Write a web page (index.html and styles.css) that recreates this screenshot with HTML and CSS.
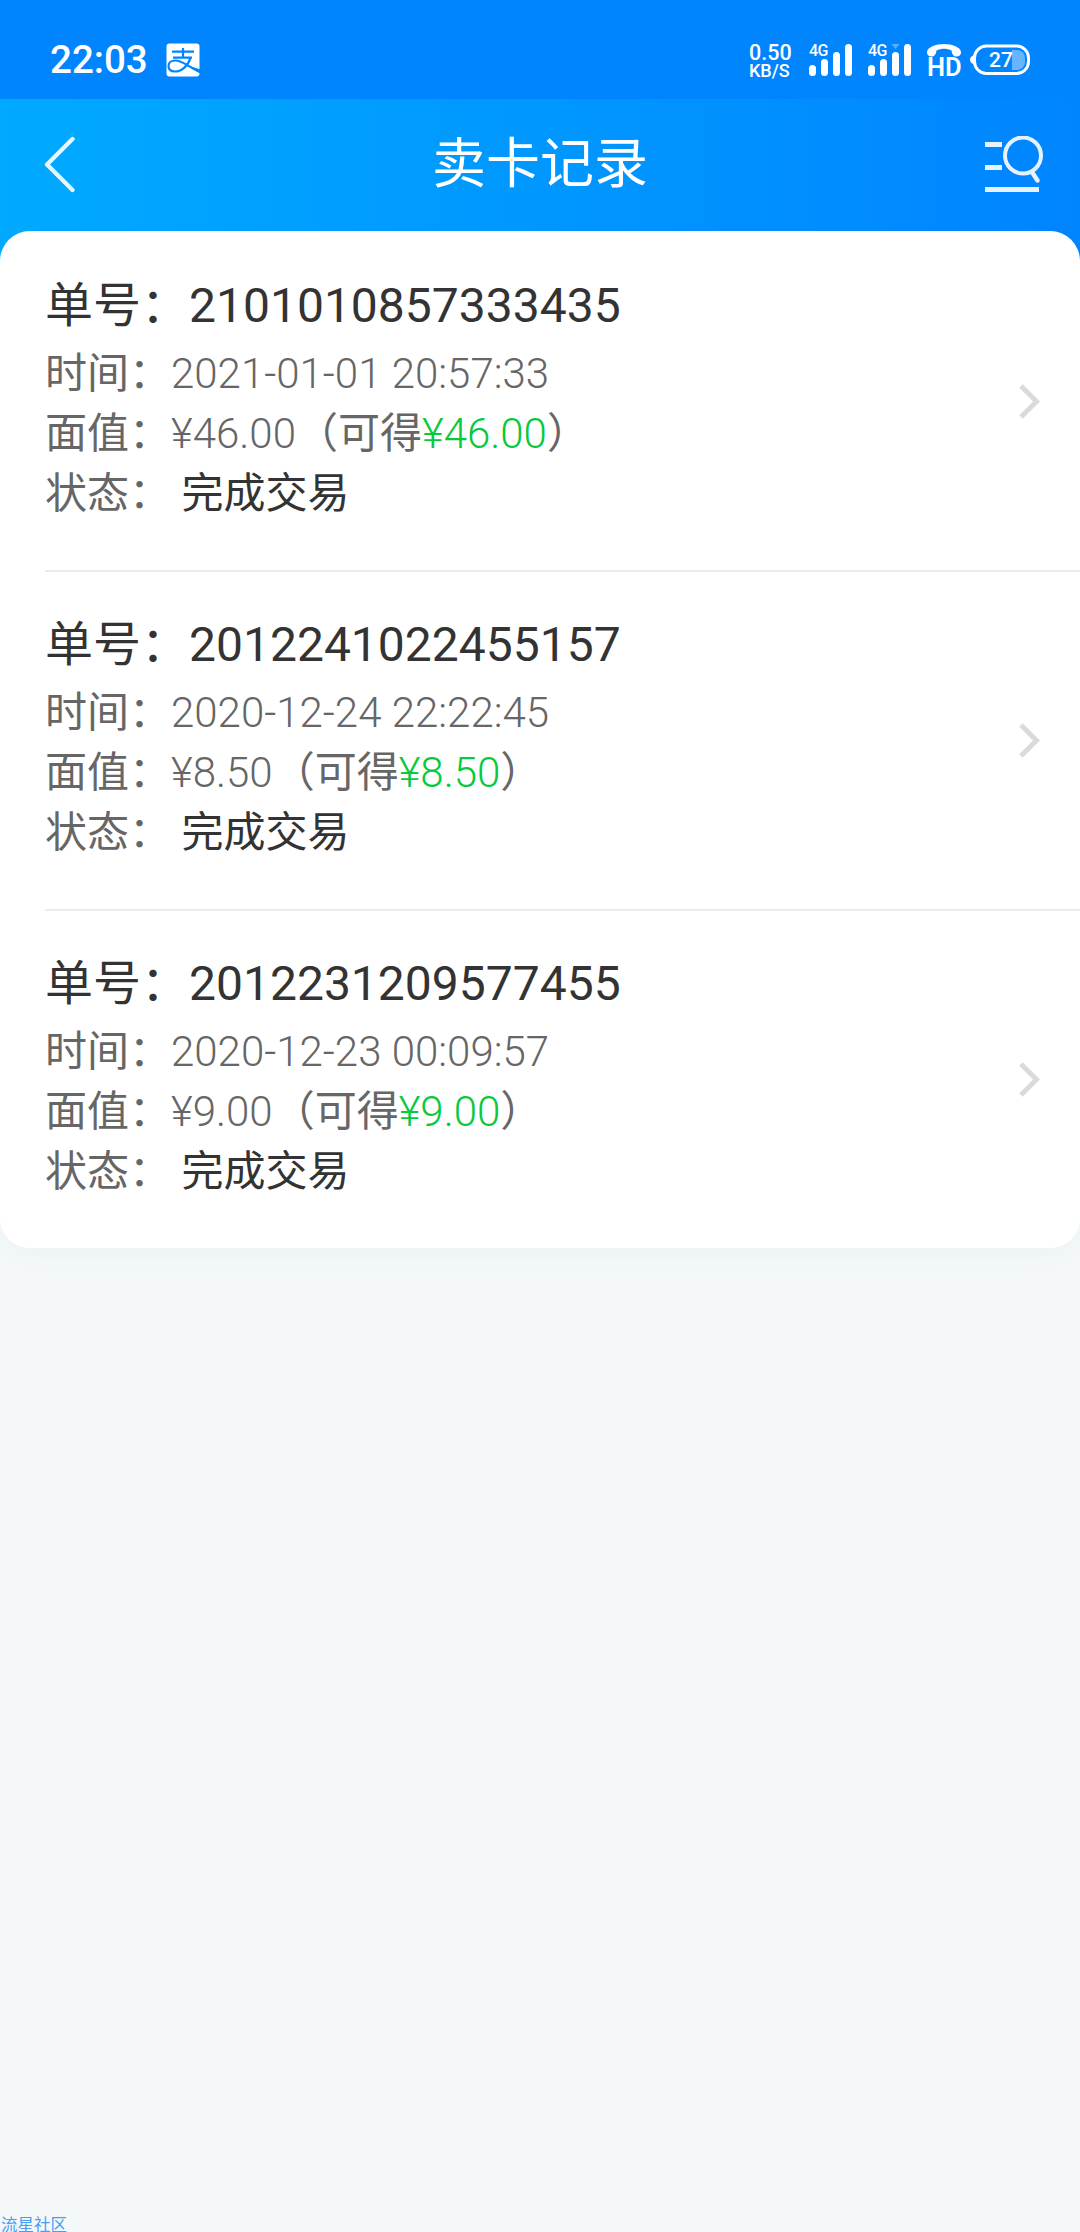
FILE: index.html
```html
<!DOCTYPE html>
<html lang="zh-CN">
<head>
<meta charset="utf-8">
<meta name="viewport" content="width=device-width, initial-scale=1">
<title>卖卡记录</title>
<link rel="stylesheet" href="styles.css">
</head>
<body>
<div class="statusbar">
  <span class="clock">22:03</span>
  <svg class="alipay" width="34" height="34" viewBox="0 0 34 34">
    <rect x="0.5" y="0.5" width="33" height="33" rx="3" fill="#fff"/>
    <g fill="none" stroke="#0085ff" stroke-width="2.2">
      <path d="M6 8.7H28M7 14.7H26M17 5V14.7"/>
      <path d="M24.5 14.7C22.5 22 16 28.5 9 28.5C4.5 28.5 2.5 26 2.5 23C2.5 19.5 5.5 17.5 9.5 17.5C17 17.5 21 23.5 34 29"/>
    </g>
    <path d="M21 22.3L34 26.3V30.5Z" fill="#0085ff"/>
  </svg>
  <div class="speed"><span class="rate">0.50</span><span class="unit">KB/S</span></div>
  <div class="signal">
    <span class="net">4G</span>
    <svg width="44" height="33" viewBox="0 0 44 33" fill="#fff">
      <rect x="0" y="21" width="7" height="11" rx="3.5"/>
      <rect x="12" y="15" width="7" height="17" rx="3.5"/>
      <rect x="24" y="8" width="7" height="24" rx="3.5"/>
      <rect x="36" y="0" width="7" height="32" rx="3.5"/>
    </svg>
  </div>
  <div class="signal">
    <span class="net">4G</span>
    <svg width="44" height="33" viewBox="0 0 44 33" fill="#fff">
      <path d="M23.5 0H31.5L27.5 5Z" opacity="0.35"/>
      <rect x="0" y="21" width="7" height="11" rx="3.5"/>
      <rect x="12" y="15" width="7" height="17" rx="3.5"/>
      <rect x="24" y="8" width="7" height="24" rx="3.5"/>
      <rect x="36" y="0" width="7" height="32" rx="3.5"/>
    </svg>
  </div>
  <div class="hd">
    <svg width="34" height="13" viewBox="0 0 34 13">
      <path d="M0 8.5C0 3 9 0 17 0S34 3 34 8.5C34 11 32 12.5 29.5 12.5C26.5 12.5 25 10.500 24.5 6.5C20 4 14 4 9.5 6.5C9 10.500 7.5 12.5 4.500 12.5C2 12.5 0 11 0 8.5Z" fill="#fff"/>
    </svg>
    <span>HD</span>
  </div>
  <div class="battery">
    <svg width="60" height="32" viewBox="0 0 60 32">
      <path d="M4 11C-1.3 13 -1.3 18.5 4 20.500Z" fill="#fff"/>
      <rect x="4.5" y="2" width="54" height="27.5" rx="12" fill="none" stroke="#fff" stroke-width="3"/>
      <path d="M42 6H47A8 8 0 0 1 55 14V18A8 8 0 0 1 47 26H42Z" fill="#fff" opacity="0.4"/>
    </svg>
    <span class="level">27</span>
  </div>
</div>
<div class="header">
  <svg class="back" width="32" height="58" viewBox="0 0 32 58">
    <path d="M28.5 3L3 28.5L28.5 54" fill="none" stroke="#fff" stroke-opacity="0.9" stroke-width="4.3" stroke-linecap="round" stroke-linejoin="round"/>
  </svg>
  <h1>卖卡记录</h1>
  <svg class="search" width="60" height="58" viewBox="0 0 60 58" fill="none" stroke="#e6f3ff">
    <path d="M0 8.5H17M0 31.5H17M0 53.5H54" stroke-width="5"/>
    <circle cx="38" cy="19.5" r="18" stroke-width="4"/>
    <path d="M47 36L52.5 44.5" stroke-width="4.5" stroke-linecap="round"/>
  </svg>
</div>
<div class="list">
  <div class="item">
    <div class="info">
      <p class="order">单号：2101010857333435</p>
      <p>时间：<span class="num">2021-01-01 20:57:33</span></p>
      <p>面值：<span class="num">¥46.00</span>（可得<span class="num green">¥46.00</span>）</p>
      <p>状态： <span class="state">完成交易</span></p>
    </div>
    <svg class="arrow" width="22" height="36" viewBox="0 0 22 36"><path d="M2 2L17.5 17.5L2 33" fill="none" stroke="#dadada" stroke-width="5"/></svg>
  </div>
  <div class="item">
    <div class="info">
      <p class="order">单号：2012241022455157</p>
      <p>时间：<span class="num">2020-12-24 22:22:45</span></p>
      <p>面值：<span class="num">¥8.50</span>（可得<span class="num green">¥8.50</span>）</p>
      <p>状态： <span class="state">完成交易</span></p>
    </div>
    <svg class="arrow" width="22" height="36" viewBox="0 0 22 36"><path d="M2 2L17.5 17.5L2 33" fill="none" stroke="#dadada" stroke-width="5"/></svg>
  </div>
  <div class="item">
    <div class="info">
      <p class="order">单号：2012231209577455</p>
      <p>时间：<span class="num">2020-12-23 00:09:57</span></p>
      <p>面值：<span class="num">¥9.00</span>（可得<span class="num green">¥9.00</span>）</p>
      <p>状态： <span class="state">完成交易</span></p>
    </div>
    <svg class="arrow" width="22" height="36" viewBox="0 0 22 36"><path d="M2 2L17.5 17.5L2 33" fill="none" stroke="#dadada" stroke-width="5"/></svg>
  </div>
</div>
<div class="community">流星社区</div>
</body>
</html>
```
FILE: styles.css
```css
* {
  box-sizing: border-box;
}
body {
  margin: 0;
  height: 2232px;
  overflow: hidden;
  display: flex;
  flex-direction: column;
  background: #f4f8f9;
  font-family: Roboto, "Noto Sans CJK SC", sans-serif;
}
h1, p {
  margin: 0;
  font-weight: 400;
}
svg {
  display: block;
  flex: none;
}
.statusbar {
  height: 99px;
  flex: none;
  display: flex;
  align-items: flex-start;
  padding: 43px 50px 0 50px;
  background: #0085ff;
  color: #fff;
}
.clock {
  width: 116px;
  font-size: 38.5px;
  font-weight: 500;
  line-height: 34px;
}
.speed {
  margin-left: auto;
  width: 60px;
  display: flex;
  flex-direction: column;
  font-weight: 500;
  white-space: nowrap;
}
.rate {
  font-size: 21.5px;
  line-height: 19px;
}
.unit {
  font-size: 18px;
  line-height: 18px;
}
.signal {
  position: relative;
  margin-top: 1px;
  width: 59px;
}
.net {
  position: absolute;
  left: 0;
  top: 0;
  font-size: 16px;
  font-weight: 500;
  line-height: 13px;
  letter-spacing: -0.5px;
}
.hd {
  margin-top: 1px;
  width: 43px;
}
.hd span {
  display: block;
  font-size: 25.5px;
  font-weight: 600;
  line-height: 21px;
}
.battery {
  position: relative;
  margin-top: 1px;
}
.level {
  position: absolute;
  left: 19px;
  top: 6px;
  font-size: 21px;
  font-weight: 500;
  line-height: 20px;
}
.header {
  height: 162px;
  flex: none;
  display: flex;
  padding: 37px 35px 0 44px;
  background: linear-gradient(90deg, #00aaff, #0085ff);
  color: #fff;
}
.header h1 {
  flex: 1;
  margin: 2px 0 0 19px;
  text-align: center;
  font-size: 54px;
  line-height: 54px;
}
.list {
  position: relative;
  margin-top: -30px;
  border-radius: 30px;
  background: #fff;
  box-shadow: 0 10px 30px rgba(0, 100, 130, 0.03);
}
.item {
  height: 339px;
  margin-left: 45px;
  padding: 41px 39px 0 0;
  display: flex;
  justify-content: space-between;
}
.item + .item {
  padding-top: 39px;
  border-top: 2px solid #ebebeb;
}
.info p {
  font-size: 42px;
  line-height: 60px;
  color: #666;
  white-space: pre;
}
.info .order {
  margin-bottom: 4px;
  font-size: 48px;
  line-height: 68px;
  color: #333;
}
.num {
  font-weight: 300;
}
.info .green {
  color: #07c93c;
}
.info .state {
  color: #333;
}
.arrow {
  margin-top: 112px;
}
.community {
  margin-top: auto;
  height: 16px;
  flex: none;
  padding-left: 1px;
  font-size: 16.5px;
  line-height: 20px;
  color: #45a0f5;
}
```
